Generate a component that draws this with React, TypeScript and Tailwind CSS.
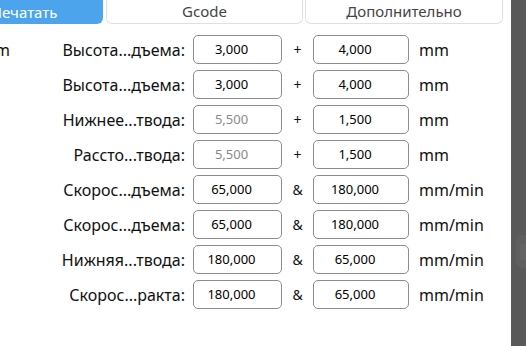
import React from 'react';

type Row = {
  label: string;
  a: string;
  op: string;
  b: string;
  unit: string;
  dimA?: boolean;
  left?: string;
};

const rows: Row[] = [
  { label: 'Высота...дъема:', a: '3,000', op: '+', b: '4,000', unit: 'mm', left: 'mm' },
  { label: 'Высота...дъема:', a: '3,000', op: '+', b: '4,000', unit: 'mm' },
  { label: 'Нижнее...твода:', a: '5,500', op: '+', b: '1,500', unit: 'mm', dimA: true },
  { label: 'Рассто...твода:', a: '5,500', op: '+', b: '1,500', unit: 'mm', dimA: true },
  { label: 'Скорос...дъема:', a: '65,000', op: '&', b: '180,000', unit: 'mm/min' },
  { label: 'Скорос...дъема:', a: '65,000', op: '&', b: '180,000', unit: 'mm/min' },
  { label: 'Нижняя...твода:', a: '180,000', op: '&', b: '65,000', unit: 'mm/min' },
  { label: 'Скорос...ракта:', a: '180,000', op: '&', b: '65,000', unit: 'mm/min' },
];

const font = { fontFamily: '"Noto Sans", "Open Sans", sans-serif' };

function Field({ value, dim, width }: { value: string; dim?: boolean; width: string }) {
  return (
    <div
      className={`${width} h-[29px] shrink-0 rounded-[5px] border border-[#8c8c8c] bg-white flex items-center justify-center pr-[12px] text-[13px] ${
        dim ? 'text-[#8a8a8a]' : 'text-black'
      }`}
    >
      {value}
    </div>
  );
}

export default function App() {
  return (
    <div className="w-[526px] h-[346px] bg-white flex overflow-hidden text-[#111]" style={font}>
      <div className="flex-1 flex flex-col overflow-hidden">
        {/* Tabs */}
        <div className="flex h-[24px] shrink-0">
          <div className="w-[103px] h-full bg-[#4ca5ec] rounded-br-[6px] text-white text-[15px] flex items-center overflow-hidden">
            <span className="-ml-[9px] whitespace-nowrap">Печатать</span>
          </div>
          <div className="ml-[3px] w-[197px] h-full border border-t-0 border-[#dfdfe6] rounded-b-[6px] flex items-center justify-center text-[15px] text-[#444]">
            Gcode
          </div>
          <div className="ml-[2px] w-[198px] h-full border border-t-0 border-[#dfdfe6] rounded-b-[6px] flex items-center justify-center text-[15px] text-[#444]">
            Дополнительно
          </div>
        </div>

        {/* Form rows */}
        <div className="flex flex-col gap-[6px] pt-[11px]">
          {rows.map((r, i) => (
            <div key={i} className="flex items-center h-[29px]">
              <div className="w-[40px] -ml-[30px] shrink-0 text-right text-[16px] whitespace-nowrap">
                {r.left ?? ''}
              </div>
              <div className="w-[175px] shrink-0 text-right text-[16px] whitespace-nowrap">{r.label}</div>
              <div className="ml-[8px]">
                <Field value={r.a} dim={r.dimA} width="w-[89px]" />
              </div>
              <div className="w-[31px] shrink-0 text-center text-[14px]">{r.op}</div>
              <Field value={r.b} width="w-[96px]" />
              <div className="ml-[10px] text-[16px] whitespace-nowrap">{r.unit}</div>
            </div>
          ))}
        </div>
      </div>

      {/* Right dark strip */}
      <div className="w-[15px] h-full bg-[#595959] shrink-0 flex flex-col">
        <div className="h-[235px]" />
        <div className="ml-[5px] h-[33px] rounded-l-[6px] bg-[#5f5f5f] flex items-center">
          <div className="ml-[4px] w-[6px] h-[16px] bg-[#646464]" />
        </div>
      </div>
    </div>
  );
}
